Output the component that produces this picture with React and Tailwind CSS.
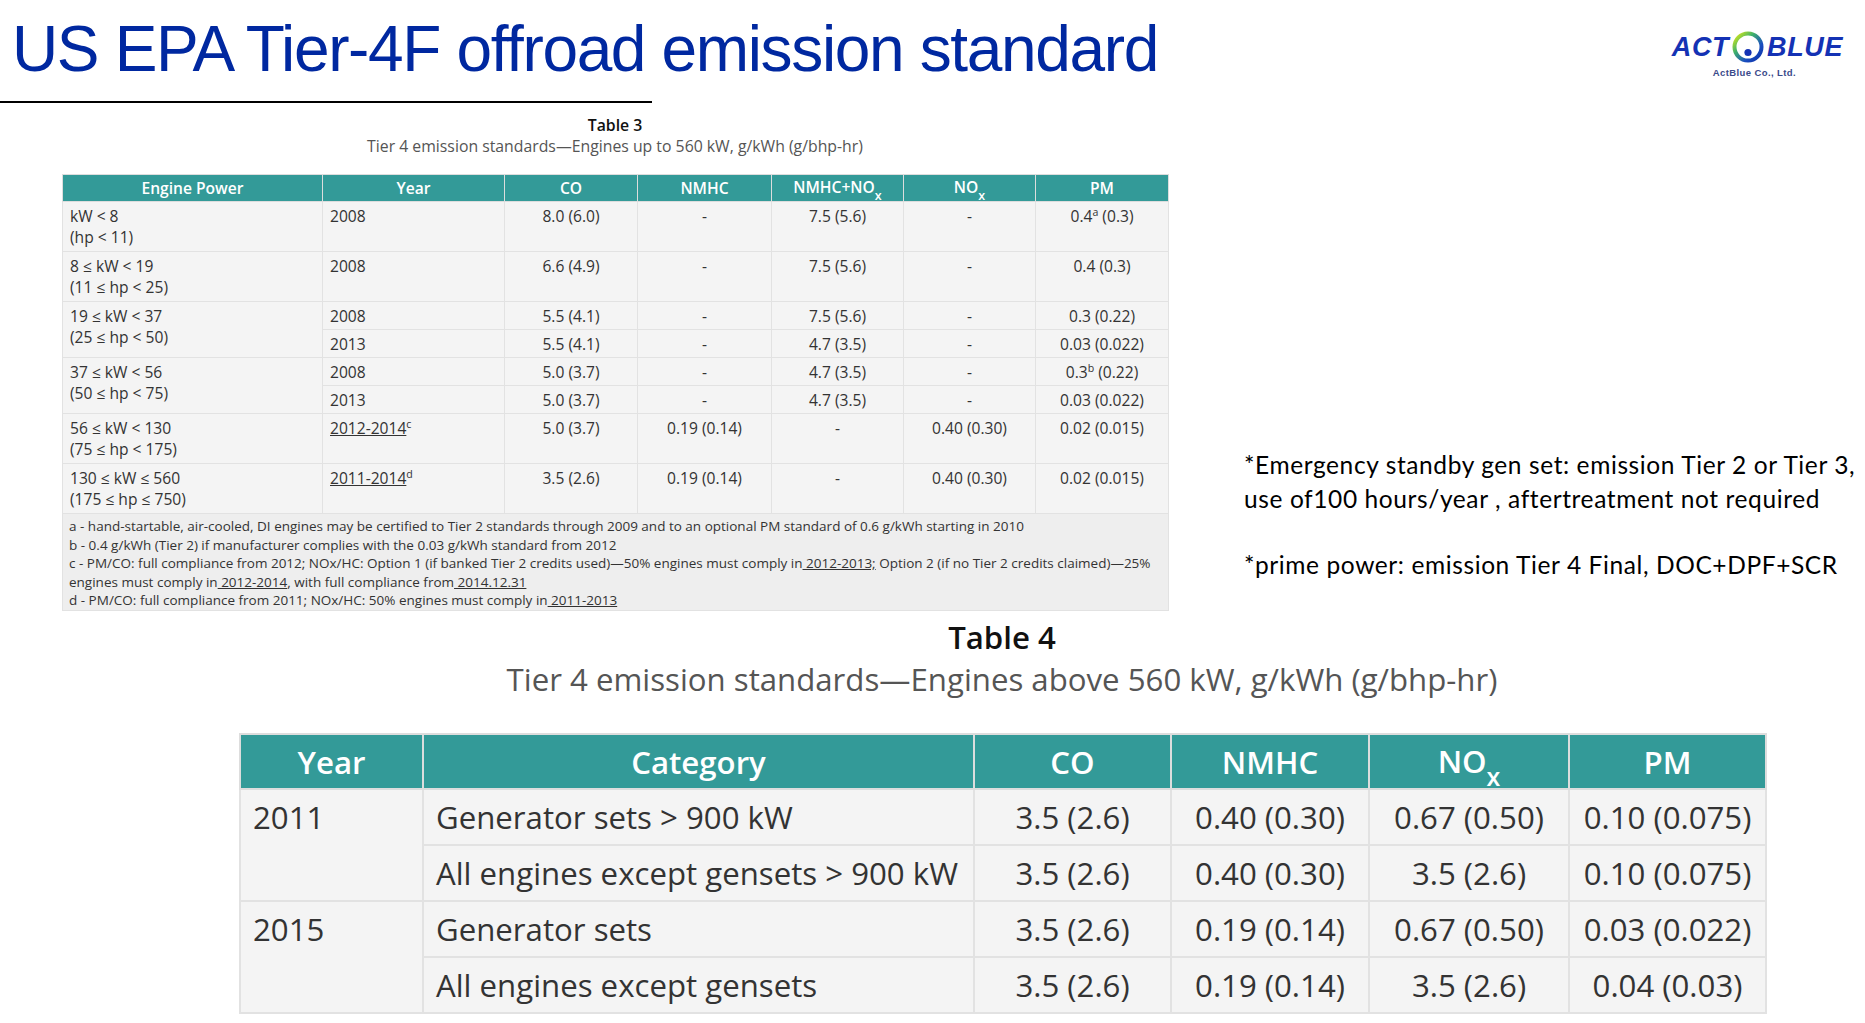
import React from 'react'

const TEAL = 'bg-[#339a98]'

function Sup({ children }) {
  return <span className="relative -top-[6px] text-[0.68em] leading-none">{children}</span>
}

function NOx() {
  return (
    <span>
      NO<sub className="text-[0.8em] align-sub leading-none">x</sub>
    </span>
  )
}

function Logo() {
  return (
    <div className="flex flex-col items-center pt-[31px] pr-[22px]">
      <div className="flex items-center font-['Liberation_Sans',Arial,sans-serif] font-bold italic text-[27px] leading-none text-[#1432b4] tracking-[0.6px]">
        <span>ACT</span>
        <svg width="36" height="32" viewBox="0 0 36 32" className="mx-[1px]" aria-hidden="true">
          <defs>
            <linearGradient id="ring" x1="0" y1="0" x2="1" y2="1">
              <stop offset="0" stopColor="#e6ee10" />
              <stop offset="0.35" stopColor="#3fb26a" />
              <stop offset="0.7" stopColor="#1a4fc0" />
              <stop offset="1" stopColor="#0c2fa8" />
            </linearGradient>
          </defs>
          <circle cx="18" cy="16" r="13.5" fill="none" stroke="url(#ring)" strokeWidth="4" />
          <circle cx="18" cy="21.5" r="3.6" fill="#1432b4" />
        </svg>
        <span>BLUE</span>
      </div>
      <div className="mt-[5px] mr-[6px] font-['Liberation_Sans',Arial,sans-serif] font-bold text-[9.5px] leading-none text-[#3a4a8a] tracking-[0.4px]">
        ActBlue Co., Ltd.
      </div>
    </div>
  )
}

const t3Rows = [
  { h: 'h-[50px]', power: ['kW < 8', '(hp < 11)'], span: 1, year: '2008', co: '8.0 (6.0)', nmhc: '-', nn: '7.5 (5.6)', nox: '-', pm: <>0.4<Sup>a</Sup> (0.3)</> },
  { h: 'h-[50px]', power: ['8 ≤ kW < 19', '(11 ≤ hp < 25)'], span: 1, year: '2008', co: '6.6 (4.9)', nmhc: '-', nn: '7.5 (5.6)', nox: '-', pm: '0.4 (0.3)' },
  { h: 'h-[28px]', power: ['19 ≤ kW < 37', '(25 ≤ hp < 50)'], span: 2, year: '2008', co: '5.5 (4.1)', nmhc: '-', nn: '7.5 (5.6)', nox: '-', pm: '0.3 (0.22)' },
  { h: 'h-[28px]', year: '2013', co: '5.5 (4.1)', nmhc: '-', nn: '4.7 (3.5)', nox: '-', pm: '0.03 (0.022)' },
  { h: 'h-[28px]', power: ['37 ≤ kW < 56', '(50 ≤ hp < 75)'], span: 2, year: '2008', co: '5.0 (3.7)', nmhc: '-', nn: '4.7 (3.5)', nox: '-', pm: <>0.3<Sup>b</Sup> (0.22)</> },
  { h: 'h-[28px]', year: '2013', co: '5.0 (3.7)', nmhc: '-', nn: '4.7 (3.5)', nox: '-', pm: '0.03 (0.022)' },
  { h: 'h-[50px]', power: ['56 ≤ kW < 130', '(75 ≤ hp < 175)'], span: 1, year: <><span className="underline">2012-2014</span><Sup>c</Sup></>, co: '5.0 (3.7)', nmhc: '0.19 (0.14)', nn: '-', nox: '0.40 (0.30)', pm: '0.02 (0.015)' },
  { h: 'h-[50px]', power: ['130 ≤ kW ≤ 560', '(175 ≤ hp ≤ 750)'], span: 1, year: <><span className="underline">2011-2014</span><Sup>d</Sup></>, co: '3.5 (2.6)', nmhc: '0.19 (0.14)', nn: '-', nox: '0.40 (0.30)', pm: '0.02 (0.015)' },
]

function Table3() {
  const th = 'border border-[#dddddd] font-semibold text-white text-center px-[6px]'
  const td = 'border border-[#e2e2e2] align-top pt-[4px] px-[7px]'
  return (
    <div className="w-[1106px] ml-[62px] font-['Open_Sans',sans-serif]">
      <div className="text-center text-[15.8px] leading-[21px]">
        <div className="font-semibold text-[#111]">Table 3</div>
        <div className="text-[#555]">Tier 4 emission standards—Engines up to 560 kW, g/kWh (g/bhp-hr)</div>
      </div>
      <table className="mt-[17px] w-full table-fixed border-collapse text-[15.6px] leading-[21px] text-[#333]">
        <colgroup>
          <col className="w-[260px]" />
          <col className="w-[182px]" />
          <col className="w-[133px]" />
          <col className="w-[134px]" />
          <col className="w-[132px]" />
          <col className="w-[132px]" />
          <col className="w-[133px]" />
        </colgroup>
        <thead>
          <tr className={`${TEAL} h-[27px]`}>
            <th className={th}>Engine Power</th>
            <th className={th}>Year</th>
            <th className={th}>CO</th>
            <th className={th}>NMHC</th>
            <th className={th}>NMHC+<NOx /></th>
            <th className={th}><NOx /></th>
            <th className={th}>PM</th>
          </tr>
        </thead>
        <tbody className="bg-[#f4f4f4]">
          {t3Rows.map((r, i) => (
            <tr key={i} className={r.h}>
              {r.power && (
                <td rowSpan={r.span} className={td}>
                  {r.power[0]}
                  <br />
                  {r.power[1]}
                </td>
              )}
              <td className={td}>{r.year}</td>
              <td className={`${td} text-center`}>{r.co}</td>
              <td className={`${td} text-center`}>{r.nmhc}</td>
              <td className={`${td} text-center`}>{r.nn}</td>
              <td className={`${td} text-center`}>{r.nox}</td>
              <td className={`${td} text-center`}>{r.pm}</td>
            </tr>
          ))}
          <tr className="h-[97px]">
            <td colSpan={7} className="border border-[#e2e2e2] bg-[#eeeeee] px-[6px] pt-[3px] align-top text-[13.5px] leading-[18.5px] whitespace-nowrap">
              a - hand-startable, air-cooled, DI engines may be certified to Tier 2 standards through 2009 and to an optional PM standard of 0.6 g/kWh starting in 2010
              <br />
              b - 0.4 g/kWh (Tier 2) if manufacturer complies with the 0.03 g/kWh standard from 2012
              <br />
              c - PM/CO: full compliance from 2012; NOx/HC: Option 1 (if banked Tier 2 credits used)—50% engines must comply in<span className="underline"> 2012-2013;</span> Option 2 (if no Tier 2 credits claimed)—25%
              <br />
              engines must comply in<span className="underline"> 2012-2014</span>, with full compliance from<span className="underline"> 2014.12.31</span>
              <br />
              d - PM/CO: full compliance from 2011; NOx/HC: 50% engines must comply in<span className="underline"> 2011-2013</span>
            </td>
          </tr>
        </tbody>
      </table>
    </div>
  )
}

const t4Rows = [
  { year: '2011', cat: 'Generator sets > 900 kW', co: '3.5 (2.6)', nmhc: '0.40 (0.30)', nox: '0.67 (0.50)', pm: '0.10 (0.075)' },
  { cat: 'All engines except gensets > 900 kW', co: '3.5 (2.6)', nmhc: '0.40 (0.30)', nox: '3.5 (2.6)', pm: '0.10 (0.075)' },
  { year: '2015', cat: 'Generator sets', co: '3.5 (2.6)', nmhc: '0.19 (0.14)', nox: '0.67 (0.50)', pm: '0.03 (0.022)' },
  { cat: 'All engines except gensets', co: '3.5 (2.6)', nmhc: '0.19 (0.14)', nox: '3.5 (2.6)', pm: '0.04 (0.03)' },
]

function Table4() {
  const th = 'border-2 border-[#dddddd] font-semibold text-white text-center'
  const td = 'border-2 border-[#e2e2e2] align-top pt-[6px] px-[12px]'
  return (
    <div className="w-[1526px] ml-[239px] font-['Open_Sans',sans-serif]">
      <div className="text-center text-[31.2px] leading-[42px] mt-[5px]">
        <div className="font-semibold text-[#111]">Table 4</div>
        <div className="text-[#555]">Tier 4 emission standards—Engines above 560 kW, g/kWh (g/bhp-hr)</div>
      </div>
      <table className="mt-[33px] w-full table-fixed border-collapse text-[31.2px] leading-[42px] text-[#333]">
        <colgroup>
          <col className="w-[183px]" />
          <col className="w-[551px]" />
          <col className="w-[197px]" />
          <col className="w-[198px]" />
          <col className="w-[200px]" />
          <col className="w-[197px]" />
        </colgroup>
        <thead>
          <tr className={`${TEAL} h-[55px]`}>
            <th className={th}>Year</th>
            <th className={th}>Category</th>
            <th className={th}>CO</th>
            <th className={th}>NMHC</th>
            <th className={th}><NOx /></th>
            <th className={th}>PM</th>
          </tr>
        </thead>
        <tbody className="bg-[#f4f4f4]">
          {t4Rows.map((r, i) => (
            <tr key={i} className="h-[56px]">
              {r.year && (
                <td rowSpan={2} className={td}>{r.year}</td>
              )}
              <td className={td}>{r.cat}</td>
              <td className={`${td} text-center`}>{r.co}</td>
              <td className={`${td} text-center`}>{r.nmhc}</td>
              <td className={`${td} text-center`}>{r.nox}</td>
              <td className={`${td} text-center`}>{r.pm}</td>
            </tr>
          ))}
        </tbody>
      </table>
    </div>
  )
}

export default function App() {
  return (
    <div className="w-[1865px] h-[1023px] overflow-hidden bg-white flex flex-col">
      <header className="flex justify-between h-[101px]">
        <h1 className="pl-[12px] pt-[17px] font-['Liberation_Sans',Arial,sans-serif] text-[64px] leading-[64px] tracking-[-1.35px] text-[#0028a0] whitespace-nowrap">
          US EPA Tier-4F offroad emission standard
        </h1>
        <Logo />
      </header>
      <div className="h-[2px] w-[652px] bg-black" />
      <div className="flex mt-[12px]">
        <Table3 />
        <aside className="ml-[76px] pt-[333px] font-['Lato',sans-serif] text-[24.5px] leading-[34px] tracking-[0.6px] text-black whitespace-nowrap">
          <p>*Emergency standby gen set: emission Tier 2 or Tier 3,</p>
          <p>use of100 hours/year , aftertreatment not required</p>
          <p className="mt-[32px]">*prime power: emission Tier 4 Final, DOC+DPF+SCR</p>
        </aside>
      </div>
      <Table4 />
    </div>
  )
}
